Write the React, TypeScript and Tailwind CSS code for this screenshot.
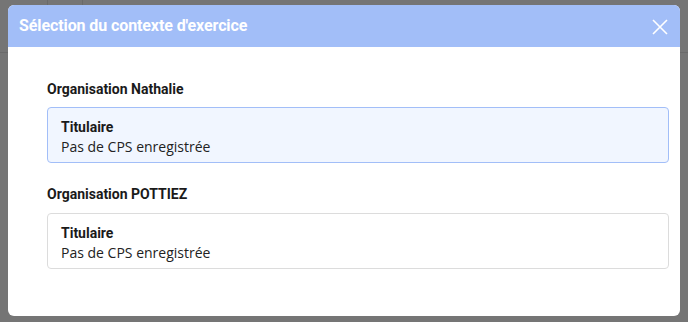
import React from "react";

function Card({ selected }: { selected?: boolean }) {
  return (
    <div
      className={
        "rounded-[4px] border px-[13px] pt-[10px] pb-[6px] " +
        (selected ? "border-[#a2bef8] bg-[#f1f6ff]" : "border-[#dcdcdc] bg-white")
      }
    >
      <div className="font-['Roboto',sans-serif] text-[14px] font-bold leading-[18px] text-[#1a1a1a]">Titulaire</div>
      <div className="font-['Open_Sans',sans-serif] text-[14px] leading-[19px] pt-[1px] text-[#222]">Pas de CPS enregistrée</div>
    </div>
  );
}

export default function App() {
  return (
    <div className="relative h-[322px] w-[688px] overflow-hidden bg-[#757575]">
      <div className="absolute left-[47px] top-0 h-[5px] w-px bg-[#6a6a6a]" />
      <div className="absolute left-[82px] top-0 h-[5px] w-px bg-[#6a6a6a]" />
      <div className="absolute left-0 top-[52px] h-px w-[8px] bg-[#6a6a6a]" />
      <div className="absolute right-0 top-[52px] h-px w-[8px] bg-[#6a6a6a]" />
      <div className="absolute left-[8px] top-[5px] flex h-[311px] w-[672px] flex-col overflow-hidden rounded-[6px] bg-white">
        <div className="flex h-[42px] items-center justify-between bg-[#a2bef8] pl-[11px] pr-[12px]">
          <div className="font-['Roboto',sans-serif] text-[16px] font-bold tracking-[-0.1px] text-white">Sélection du contexte d'exercice</div>
          <svg width="16" height="16" viewBox="0 0 16 16" className="mt-[1px]">
            <path d="M1 1L15 15M15 1L1 15" stroke="white" strokeWidth="1.6" />
          </svg>
        </div>
        <div className="flex flex-col pl-[39px] pr-[11px] pt-[33px]">
          <div className="font-['Roboto',sans-serif] text-[14px] font-bold leading-[18px] text-[#1a1a1a]">Organisation Nathalie</div>
          <div className="mt-[9px]">
            <Card selected />
          </div>
          <div className="mt-[22px] font-['Roboto',sans-serif] text-[14px] font-bold leading-[18px] text-[#1a1a1a]">Organisation POTTIEZ</div>
          <div className="mt-[10px]">
            <Card />
          </div>
        </div>
      </div>
    </div>
  );
}
